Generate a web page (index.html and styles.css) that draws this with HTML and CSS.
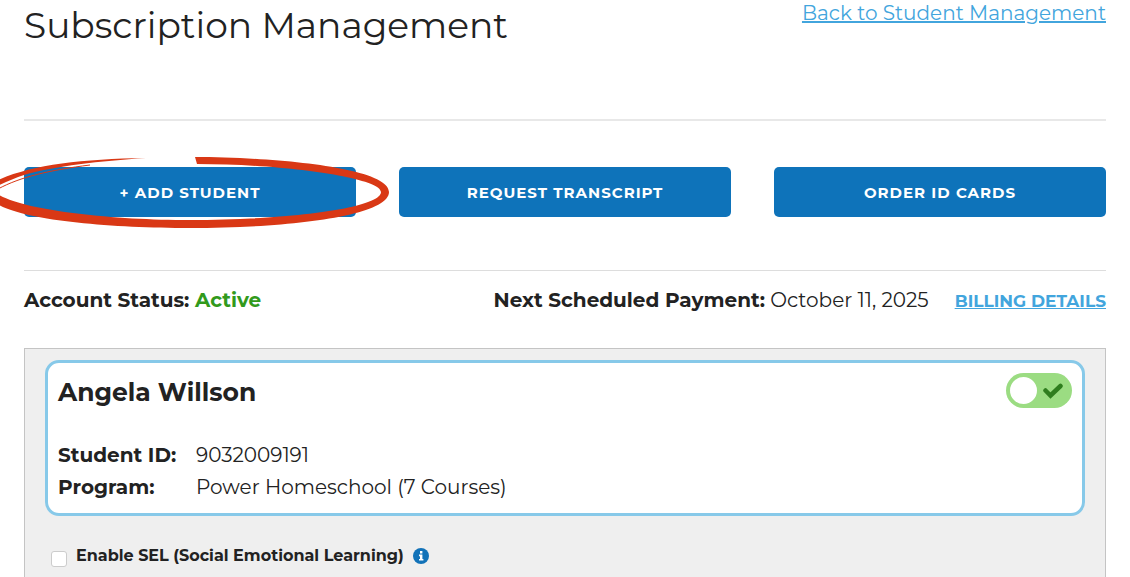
FILE: index.html
```html
<!DOCTYPE html>
<html lang="en">
<head>
    <meta charset="UTF-8">
    <meta name="viewport" content="width=device-width, initial-scale=1.0">
    <title>Subscription Management</title>
    <link rel="stylesheet" href="styles.css">
</head>
<body>

    <header class="page-header">
        <h1>Subscription Management</h1>
        <a class="back-link" href="#">Back to Student Management</a>
    </header>

    <!-- Main actions -->
    <div class="actions">
        <div class="action">
            <button type="button">+ Add Student</button>
            <svg class="marker" viewBox="0 0 400 90" width="400" height="90" aria-hidden="true">
                <path fill="#d93815" d="M195 7 C270 7 389 17 389 42 C389 66 290 78 190 78 C110 78 20 70 -4 53 L-4 43 C20 60 110 70 190 70 C290 70 381 58 381 42 C381 28 285 14 197 14 Z"/>
                <path fill="#d93815" d="M-4 31 C30 15 80 9 146 8 C100 11 55 16 24 25 C15 28 5 32 -4 37 Z"/>
                <path fill="none" stroke="#d93815" d="M-2 39 C20 27 50 20 90 15"/>
            </svg>
        </div>
        <div class="action">
            <button type="button">Request Transcript</button>
        </div>
        <div class="action">
            <button type="button">Order ID Cards</button>
        </div>
    </div>

    <!-- Account status -->
    <div class="account">
        <p class="status"><strong>Account Status: <span class="active">Active</span></strong></p>
        <p class="payment"><strong>Next Scheduled Payment:</strong> October 11, 2025</p>
        <a class="billing-link" href="#">BILLING DETAILS</a>
    </div>

    <!-- Students -->
    <div class="students">
        <div class="student-card">
            <div class="student-header">
                <h2>Angela Willson</h2>
                <label class="toggle">
                    <input type="checkbox" aria-label="Subscription active" checked>
                    <svg viewBox="0 0 20 16" width="20" height="16" aria-hidden="true">
                        <path d="M2.500 7.500 L7.500 12.500 L17.500 3" fill="none" stroke="#2f7d1e" stroke-width="4.500" stroke-linecap="round"/>
                    </svg>
                </label>
            </div>
            <dl class="details">
                <dt>Student ID:</dt>
                <dd>9032009191</dd>
                <dt>Program:</dt>
                <dd>Power Homeschool (7 Courses)</dd>
            </dl>
        </div>
        <div class="option">
            <input type="checkbox" id="enableSel">
            <label for="enableSel">Enable SEL (Social Emotional Learning)</label>
            <svg viewBox="0 0 16 16" width="16" height="16" aria-hidden="true">
                <circle cx="8" cy="8" r="8" fill="#1272b8"/>
                <path d="M7 3 H9.400 V5.400 H7 Z M6 6.600 H9.400 V11 H10.400 V12.600 H6 V11 H7 V8.200 H6 Z" fill="#fff"/>
            </svg>
        </div>
    </div>

</body>
</html>
```

FILE: styles.css
```css
* {
    box-sizing: border-box;
}
body {
    font-family: Montserrat, Inter, sans-serif;
    font-size: 20px;
    line-height: 32px;
    color: #222;
    background-color: #fff;
    margin: 0;
    padding: 0 24px;
}
h1, h2, p, dl, dd {
    margin: 0;
}
a {
    color: #42a5dd;
}
strong {
    font-weight: 700;
}
.page-header {
    display: flex;
    justify-content: space-between;
    align-items: flex-start;
    padding-bottom: 68px;
    border-bottom: 2px solid #e8e8e8;
}
h1 {
    font-size: 36px;
    font-weight: 400;
    line-height: 51px;
}
.back-link {
    font-size: 20px;
    line-height: 26px;
}

.actions {
    display: grid;
    grid-template-columns: repeat(3, 1fr);
    gap: 43px;
    padding: 46px 0 53px;
    border-bottom: 1px solid #ddd;
}
.action {
    position: relative;
}
.action button {
    display: block;
    width: 100%;
    height: 50px;
    padding: 0;
    border: none;
    border-radius: 5px;
    background-color: #0e73ba;
    color: #fff;
    font-family: inherit;
    font-size: 15px;
    font-weight: 700;
    letter-spacing: 1px;
    text-transform: uppercase;
    cursor: pointer;
}
.marker {
    position: absolute;
    left: -24px;
    top: -17px;
    pointer-events: none;
}

.account {
    display: flex;
    align-items: baseline;
    padding: 13px 0 31px;
}
.payment {
    margin-left: auto;
}
.active {
    color: #329a1c;
}
.billing-link {
    margin-left: 26px;
    font-size: 17px;
    font-weight: 700;
}

.students {
    padding: 11px 20px 0;
    border: 1px solid #c4c4c4;
    border-bottom: none;
    background-color: #efefef;
}
.student-card {
    padding: 10px;
    border: 3px solid #87c9e9;
    border-radius: 14px;
    background-color: #fff;
}
.student-header {
    display: flex;
    justify-content: space-between;
    align-items: flex-start;
    margin-bottom: 28px;
}
h2 {
    font-size: 25px;
    font-weight: 700;
    line-height: 38px;
}
.toggle {
    display: flex;
    justify-content: space-between;
    align-items: center;
    width: 66px;
    height: 35px;
    padding: 0 9px 0 4px;
    border-radius: 18px;
    background-color: #9bdc82;
}
.toggle input {
    appearance: none;
    width: 27px;
    height: 27px;
    margin: 0;
    border-radius: 50%;
    background-color: #fff;
}
.details {
    display: grid;
    grid-template-columns: 118px 1fr;
    column-gap: 20px;
}
dt {
    font-weight: 700;
    white-space: nowrap;
}
.option {
    display: flex;
    align-items: center;
    gap: 9px;
    padding: 24px 0 5px 6px;
    font-size: 16px;
    font-weight: 700;
}
.option input {
    appearance: none;
    width: 16px;
    height: 16px;
    margin: 5px 0 0;
    border: 1px solid #ccc;
    border-radius: 3px;
    background-color: #fff;
}
```
